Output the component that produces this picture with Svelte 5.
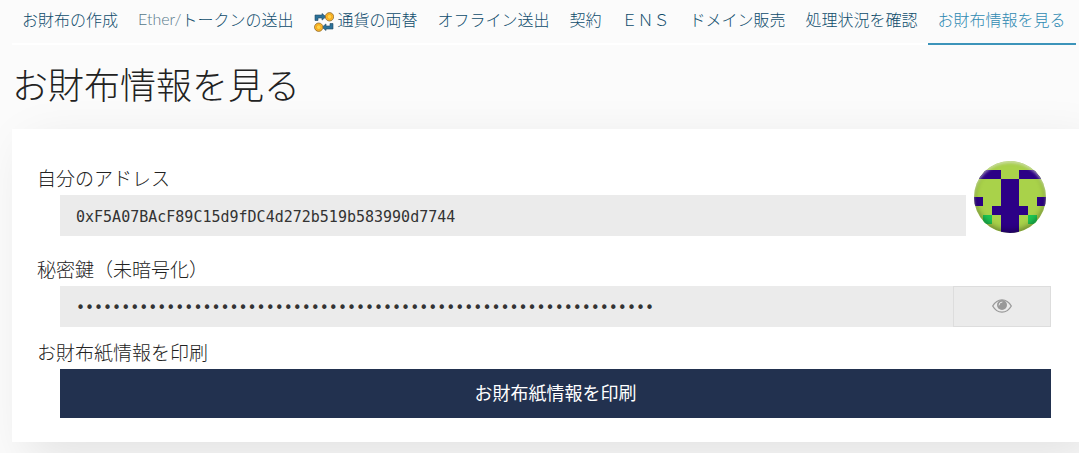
<script>
  const tabs = [
    { text: "お財布の作成" },
    { latin: "Ether/", text: "トークンの送出" },
    { text: "通貨の両替", swap: true },
    { text: "オフライン送出" },
    { text: "契約" },
    { text: "ＥＮＳ" },
    { text: "ドメイン販売" },
    { text: "処理状況を確認" },
    { text: "お財布情報を見る" }
  ];

  // p = purple, g = green, . = background
  const blocks = [
    "........",
    "ppp..ppp",
    "...pp...",
    "...pp...",
    "p..pp..p",
    "..pppp..",
    ".g.pp.g.",
    "...pp..."
  ];
  const fills = { p: "#2c0086", g: "#1dc552" };

  let active = $state(8);
  let showKey = $state(false);
  let address = "0xF5A07BAcF89C15d9fDC4d272b519b583990d7744";
  let privateKey = "3f9a1c7be2d80456".repeat(4);

  function selectTab(e, i) {
    e.preventDefault();
    active = i;
  }
</script>

<nav>
  {#each tabs as tab, i}
    <a href="#tab{i}" class:active={active === i} onclick={e => selectTab(e, i)}>
      {#if tab.swap}
        <svg class="swap" viewBox="0 0 20 20" aria-hidden="true">
          <path d="M1 8.500V3h7V1.500l4 3.300-4 3.300V6H4v2.500z" fill="#2b7199" stroke="#20465f" stroke-width=".6" />
          <path d="M19 11.500V17h-7v1.500l-4-3.300 4-3.300V14h4v-2.500z" fill="#2b7199" stroke="#20465f" stroke-width=".6" />
          <circle cx="15.500" cy="4.800" r="4.200" fill="#fbb929" stroke="#7b5a2c" stroke-width=".7" />
          <circle cx="15.500" cy="4.800" r="2.400" fill="#ffd447" stroke="#f5a01d" stroke-width=".9" />
          <circle cx="4.700" cy="15.200" r="4.200" fill="#fbb929" stroke="#7b5a2c" stroke-width=".7" />
          <circle cx="4.700" cy="15.200" r="2.400" fill="#ffd447" stroke="#f5a01d" stroke-width=".9" />
        </svg>
      {/if}
      {#if tab.latin}<span class="latin">{tab.latin}</span>{/if}{tab.text}
    </a>
  {/each}
</nav>

<main>
  <h1>お財布情報を見る</h1>

  <section class="block">
    <div class="row">
      <div class="field">
        <label for="address">自分のアドレス</label>
        <div class="control">
          <input id="address" type="text" readonly value={address} />
        </div>
      </div>
      <div class="identicon">
        <svg viewBox="0 0 8 8" shape-rendering="crispEdges" aria-hidden="true">
          {#each blocks as line, y}
            {#each line as cell, x}
              {#if fills[cell]}
                <rect {x} {y} width="1" height="1" fill={fills[cell]} />
              {/if}
            {/each}
          {/each}
        </svg>
      </div>
    </div>

    <div class="field key">
      <label for="key">秘密鍵（未暗号化）</label>
      <div class="control">
        <input id="key" type={showKey ? "text" : "password"} readonly value={privateKey} />
        <button class="eye" aria-label="toggle" onclick={() => (showKey = !showKey)}>
          <svg viewBox="0 0 20 14" aria-hidden="true">
            <path d="M.7 7C3 3 6.200.800 10 .800S17 3 19.300 7C17 11 13.800 13.200 10 13.200S3 11 .7 7z" fill="none" stroke="#999" stroke-width="1.300" />
            <circle cx="10" cy="6" r="5" fill="#999" />
            <path d="M7 6a3 3 0 0 1 3-3" fill="none" stroke="#ebebeb" stroke-width="1" stroke-linecap="round" />
          </svg>
        </button>
      </div>
    </div>

    <div class="field print">
      <label for="print">お財布紙情報を印刷</label>
      <div class="control">
        <button id="print" class="primary">お財布紙情報を印刷</button>
      </div>
    </div>
  </section>
</main>

<style>
  :global(body) {
    margin: 0;
    background: #fbfbfb;
    color: #222;
    font-family: Lato, "Noto Sans CJK JP", sans-serif;
    font-weight: 300;
  }

  nav {
    display: flex;
    padding-left: 12px;
    white-space: nowrap;
  }

  nav a {
    display: flex;
    align-items: center;
    box-sizing: border-box;
    height: 45px;
    padding: 0 10px 6px;
    border-bottom: 2px solid #fff;
    color: #0e4c6b;
    font-size: 16px;
    text-decoration: none;
  }

  nav a.active {
    border-bottom-color: #3c94ba;
    color: #2f8ab2;
  }

  .latin {
    color: #56788a;
  }

  .swap {
    width: 20px;
    height: 20px;
    margin: 6px 4px 0 0;
  }

  main {
    padding: 0 0 11px 12px;
    overflow: hidden;
  }

  h1 {
    margin: 0;
    padding: 14px 0 18px;
    font-size: 36px;
    font-weight: 300;
    line-height: 52px;
  }

  .block {
    padding: 32px 28px 24px 25px;
    background: #fff;
    box-shadow: 16px 16px 48px rgba(0, 0, 0, 0.1);
  }

  .row {
    display: flex;
    gap: 8px;
  }

  .row .field {
    flex: 1;
    padding-top: 4px;
  }

  .key {
    margin-top: 20px;
  }

  .print {
    margin-top: 12px;
  }

  label {
    display: block;
    height: 30px;
    font-size: 19px;
    line-height: 27px;
  }

  .control {
    display: flex;
    margin-left: 23px;
  }

  input {
    flex: 1;
    min-width: 0;
    box-sizing: border-box;
    height: 41px;
    margin: 0;
    padding: 2px 16px 0;
    border: 0;
    border-radius: 0;
    outline: 0;
    background: #ebebeb;
    color: #333;
    font-family: "DejaVu Sans Mono", monospace;
    font-size: 15px;
  }

  button {
    padding: 0;
    border: 0;
    font-family: inherit;
    cursor: pointer;
  }

  .eye {
    display: flex;
    align-items: center;
    justify-content: center;
    width: 98px;
    padding-bottom: 2px;
    border: 1px solid #ddd;
    background: #ebebeb;
  }

  .eye svg {
    width: 20px;
    height: 14px;
  }

  .primary {
    flex: 1;
    height: 49px;
    padding-bottom: 4px;
    background: #22314f;
    color: #fff;
    font-size: 18px;
    font-weight: 400;
  }

  .identicon {
    position: relative;
    width: 72px;
    height: 72px;
    margin-right: 5px;
    border-radius: 50%;
    overflow: hidden;
    background: #a9d24a;
  }

  .identicon svg {
    display: block;
  }

  /* glossy edge over the blocks */
  .identicon::after {
    content: "";
    position: absolute;
    inset: 0;
    border-radius: 50%;
    box-shadow:
      inset 0 2px 3px rgba(255, 255, 255, 0.5),
      inset 0 -2px 6px rgba(0, 0, 0, 0.4);
  }
</style>
